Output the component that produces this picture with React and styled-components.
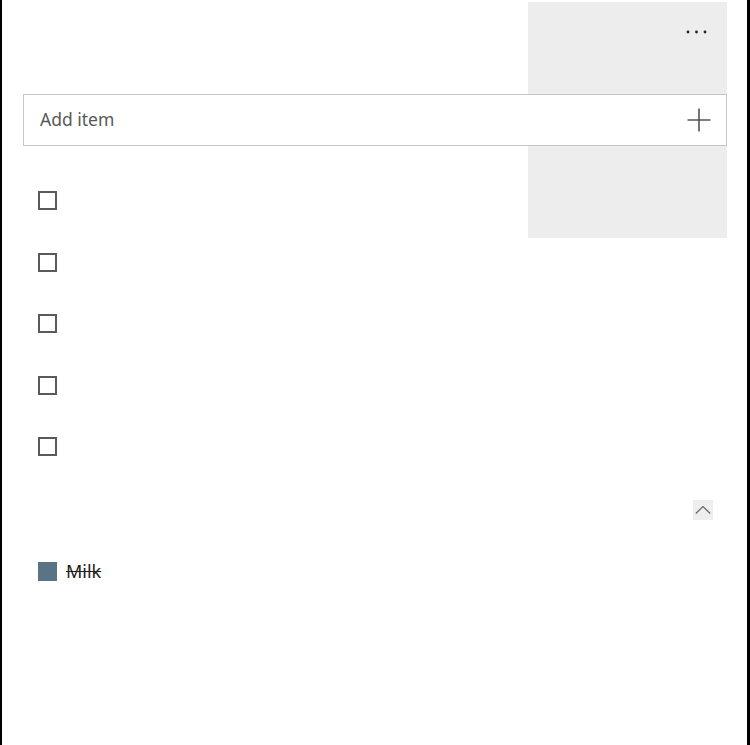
import React from 'react';
import styled, { createGlobalStyle } from 'styled-components';

const GlobalStyle = createGlobalStyle`
  html, body {
    margin: 0;
    padding: 0;
    background: #fff;
  }
  body {
    font-family: "Noto Sans", "Liberation Sans", sans-serif;
  }
`;

const Frame = styled.div`
  position: relative;
  box-sizing: border-box;
  width: 750px;
  height: 745px;
  background: #fff;
  border-left: 2px solid #000;
  border-right: 3px solid #000;
  padding: 0 20px 0 21px;
`;

const Flyout = styled.div`
  position: absolute;
  top: 2px;
  right: 20px;
  width: 199px;
  height: 236px;
  background: #ededed;
`;

const Header = styled.div`
  position: relative;
  height: 94px;
  display: flex;
  justify-content: flex-end;
  align-items: flex-start;
`;

const MoreButton = styled.button`
  border: 0;
  background: transparent;
  padding: 0;
  margin: 28px 18px 0 0;
  width: 24px;
  height: 8px;
  display: flex;
  align-items: center;
  justify-content: center;
  cursor: pointer;
`;

const AddBar = styled.div`
  position: relative;
  box-sizing: border-box;
  height: 52px;
  border: 1px solid #c6c6c6;
  background: #fff;
  display: flex;
  align-items: center;
  padding: 0 15px 0 16px;
`;

const AddInput = styled.input`
  flex: 1;
  border: 0;
  outline: none;
  background: transparent;
  font-family: "Noto Sans", "Liberation Sans", sans-serif;
  font-size: 17.5px;
  line-height: 24px;
  color: #333;
  padding: 0 0 3px;

  &::placeholder {
    color: #585858;
  }
`;

const IconButton = styled.button`
  border: 0;
  background: transparent;
  padding: 0;
  width: 24px;
  height: 24px;
  display: flex;
  align-items: center;
  justify-content: center;
  cursor: pointer;
`;

const List = styled.ul`
  position: relative;
  list-style: none;
  margin: ${p => (p.flush ? '0' : '24px 0 0')};
  padding: 0;
`;

const Row = styled.li`
  height: 61.5px;
  display: flex;
  align-items: center;
  padding-left: 15px;
  gap: 9px;
`;

const Check = styled.span`
  box-sizing: border-box;
  width: 19px;
  height: 19px;
  flex: none;
  border: ${p => (p.checked ? '0' : '2px solid #5a5a5a')};
  background: ${p => (p.checked ? '#5a7486' : 'transparent')};
`;

const Label = styled.span`
  font-size: 18px;
  line-height: 22px;
  padding-bottom: 1px;
  color: #1e1e1e;
  text-decoration: ${p => (p.done ? 'line-through' : 'none')};
  text-decoration-thickness: 1px;
`;

const CollapseRow = styled.div`
  height: 63px;
  display: flex;
  align-items: center;
  justify-content: flex-end;
  padding-right: 14px;
`;

const ChevronButton = styled.button`
  border: 0;
  background: #eeeeee;
  padding: 0;
  margin-top: 1px;
  width: 20px;
  height: 20px;
  display: flex;
  align-items: center;
  justify-content: center;
  cursor: pointer;
`;

const Dots = () => (
  <svg width="24" height="6" viewBox="0 0 24 6">
    <circle cx="3" cy="3" r="1.4" fill="#222" />
    <circle cx="11.5" cy="3" r="1.4" fill="#222" />
    <circle cx="20" cy="3" r="1.4" fill="#222" />
  </svg>
);

const Plus = () => (
  <svg width="24" height="24" viewBox="0 0 24 24">
    <path d="M12 0.5v23M0.5 12h23" stroke="#555" strokeWidth="1.6" fill="none" />
  </svg>
);

const ChevronUp = () => (
  <svg width="16" height="10" viewBox="0 0 16 10">
    <path d="M0.8 8.5L8 1.5l7.2 7" stroke="#666" strokeWidth="1.2" fill="none" />
  </svg>
);

const openItems = ['', '', '', '', ''];
const doneItems = ['Milk'];

export default function App() {
  return (
    <>
      <GlobalStyle />
      <Frame>
        <Flyout />
        <Header>
          <MoreButton aria-label="More options">
            <Dots />
          </MoreButton>
        </Header>
        <AddBar>
          <AddInput placeholder="Add item" />
          <IconButton aria-label="Add">
            <Plus />
          </IconButton>
        </AddBar>
        <List>
          {openItems.map((text, i) => (
            <Row key={i}>
              <Check />
              <Label>{text}</Label>
            </Row>
          ))}
        </List>
        <CollapseRow>
          <ChevronButton aria-label="Collapse">
            <ChevronUp />
          </ChevronButton>
        </CollapseRow>
        <List flush>
          {doneItems.map(text => (
            <Row key={text}>
              <Check checked />
              <Label done>{text}</Label>
            </Row>
          ))}
        </List>
      </Frame>
    </>
  );
}
